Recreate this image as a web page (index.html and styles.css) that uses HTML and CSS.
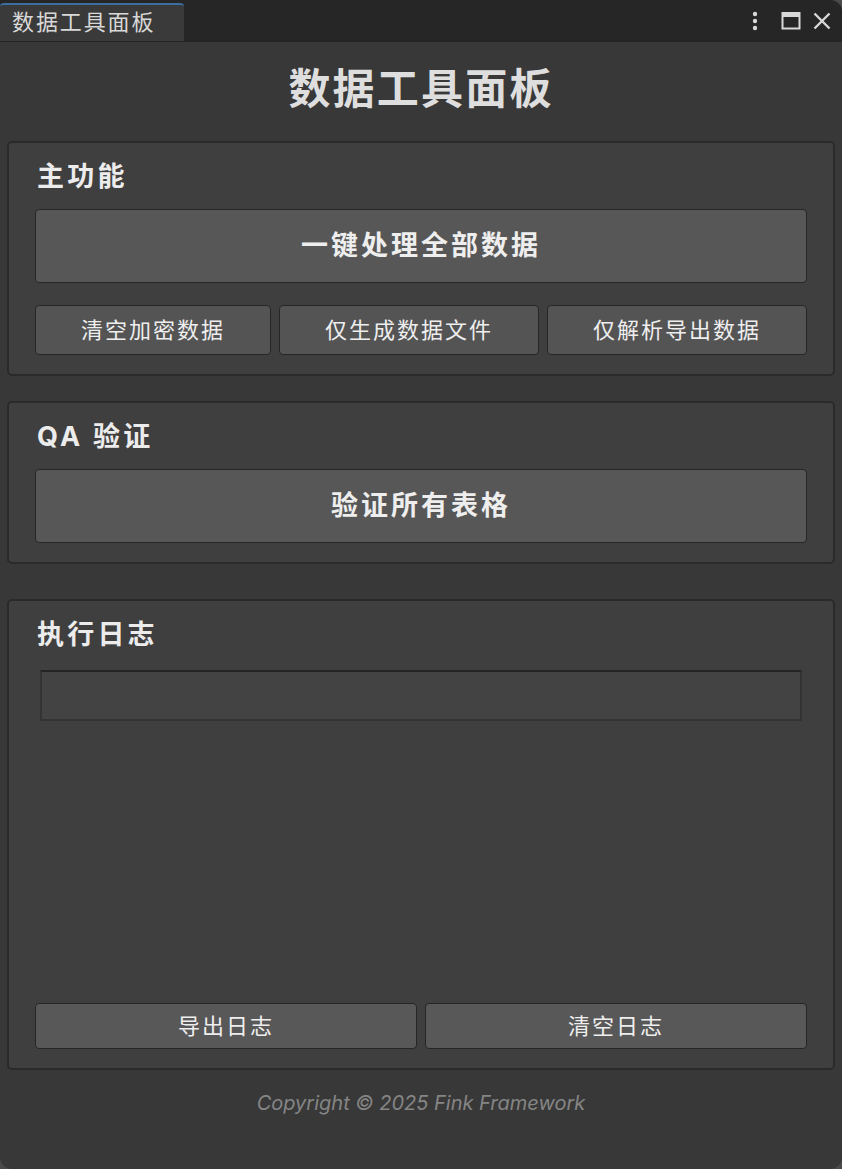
FILE: index.html
```
<!DOCTYPE html>
<html lang="zh-CN">

<head>
    <meta charset="UTF-8">
    <meta name="viewport" content="width=device-width, initial-scale=1.0">
    <title>数据工具面板</title>
    <link rel="stylesheet" href="styles.css">
</head>

<body>
    <div class="window">
        <div class="tabbar">
            <div class="tab">数据工具面板</div>
            <div class="win-icons">
                <svg class="ic-more" width="10" height="22" viewBox="0 0 10 22">
                    <circle cx="5" cy="4" r="2.2" fill="#d8d8d8" />
                    <circle cx="5" cy="11" r="2.2" fill="#d8d8d8" />
                    <circle cx="5" cy="18" r="2.2" fill="#d8d8d8" />
                </svg>
                <svg width="20" height="20" viewBox="0 0 20 20">
                    <rect x="1.5" y="2" width="17" height="15.5" fill="none" stroke="#d8d8d8" stroke-width="2" />
                    <rect x="1.5" y="2" width="17" height="4" fill="#d8d8d8" />
                </svg>
                <svg width="20" height="20" viewBox="0 0 20 20">
                    <path d="M2.5 2.5 L17.5 17.5 M17.5 2.5 L2.5 17.5" stroke="#d8d8d8" stroke-width="2.4" fill="none" />
                </svg>
            </div>
        </div>

        <div class="content">
            <h1 class="title">数据工具面板</h1>

            <div class="section">
                <div class="sec-head">主功能</div>
                <div class="btn btn-big">一键处理全部数据</div>
                <div class="btn-row">
                    <div class="btn btn-small">清空加密数据</div>
                    <div class="btn btn-small">仅生成数据文件</div>
                    <div class="btn btn-small">仅解析导出数据</div>
                </div>
            </div>

            <div class="section sec-qa">
                <div class="sec-head">QA 验证</div>
                <div class="btn btn-big">验证所有表格</div>
            </div>

            <div class="section sec-log">
                <div class="sec-head">执行日志</div>
                <div class="log-box"></div>
                <div class="log-space"></div>
                <div class="btn-row even">
                    <div class="btn btn-small btn-log">导出日志</div>
                    <div class="btn btn-small btn-log">清空日志</div>
                </div>
            </div>

            <div class="footer">Copyright © 2025 Fink Framework</div>
        </div>
    </div>
</body>

</html>
```

FILE: styles.css
```
body {
    margin: 0;
    background-color: #4a4a4a;
    font-family: Inter, "Noto Sans CJK SC", sans-serif;
    color: #e6e6e6;
}

.window {
    width: 842px;
    height: 1169px;
    background-color: #383838;
    border-radius: 0 12px 12px 12px;
    overflow: hidden;
    display: flex;
    flex-direction: column;
}

.tabbar {
    height: 42px;
    background-color: #262626;
    display: flex;
    align-items: flex-end;
    justify-content: space-between;
    border-bottom: 1px solid #232323;
    box-sizing: border-box;
}

.tab {
    width: 184px;
    height: 38px;
    box-sizing: border-box;
    background-color: #3a3a3a;
    border-top: 2px solid #3b6e9f;
    border-radius: 4px 4px 0 0;
    font-size: 22px;
    letter-spacing: 1.9px;
    line-height: 34px;
    padding-left: 12px;
    color: #d8d8d8;
}

.win-icons {
    align-self: center;
    display: flex;
    align-items: center;
    gap: 11px;
    padding-right: 10px;
}

.win-icons svg {
    display: block;
}

.ic-more {
    margin-right: 10px;
}

.content {
    flex: 1;
    display: flex;
    flex-direction: column;
    padding: 0 7px;
}

.title {
    margin: 0;
    height: 99px;
    line-height: 93px;
    text-align: center;
    font-size: 42px;
    letter-spacing: 2.2px;
    font-weight: bold;
    color: #dedede;
}

.section {
    background-color: #3f3f3f;
    border: 2px solid #2a2a2a;
    border-radius: 5px;
    padding: 14px 26px 19px 26px;
    display: flex;
    flex-direction: column;
    margin-bottom: 25px;
}

.sec-head {
    height: 40px;
    line-height: 40px;
    font-size: 27px;
    font-weight: bold;
    letter-spacing: 3.2px;
    padding-left: 2px;
    margin-bottom: 12px;
    color: #ececec;
}

.btn {
    background-color: #575757;
    border: 1px solid #262626;
    border-radius: 4px;
    text-align: center;
    color: #eeeeee;
    box-sizing: border-box;
}

.btn-big {
    height: 74px;
    line-height: 72px;
    font-size: 27px;
    font-weight: bold;
    letter-spacing: 3px;
}

.btn-row {
    display: flex;
    gap: 8px;
    margin-top: 22px;
}

.btn-small {
    flex: 1 1 auto;
    height: 50px;
    line-height: 48px;
    font-size: 22px;
    letter-spacing: 2px;
    background-color: #545454;
}

.btn-row.even .btn {
    flex: 1 1 0;
}

.btn-log {
    height: 46px;
    line-height: 44px;
    background-color: #585858;
}

.sec-qa {
    margin-bottom: 35px;
}

.sec-log {
    height: 471px;
    box-sizing: border-box;
    padding-bottom: 19px;
    margin-bottom: 0;
}

.log-box {
    margin: 3px 5px 0 5px;
    height: 51px;
    box-sizing: border-box;
    background-color: #434343;
    border: 2px solid #333333;
    border-top-color: #242424;
}

.log-space {
    flex: 1;
}

.footer {
    text-align: center;
    font-style: italic;
    font-size: 20px;
    color: #858585;
    margin-top: 20px;
    line-height: 26px;
}
```
